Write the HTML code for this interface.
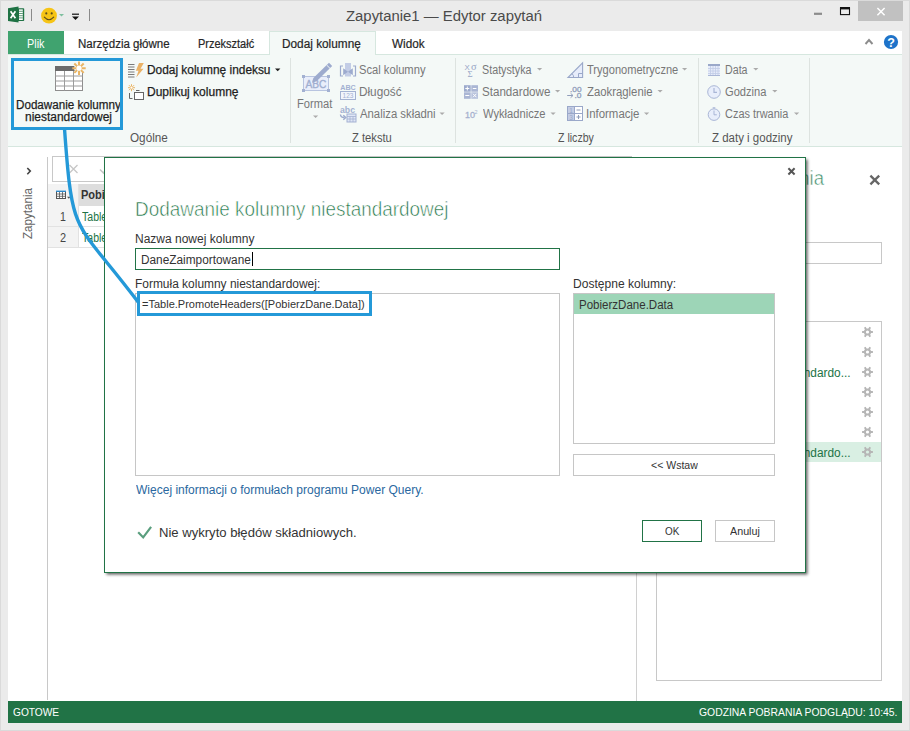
<!DOCTYPE html>
<html>
<head>
<meta charset="utf-8">
<title>Zapytanie1 — Edytor zapytań</title>
<style>
*{box-sizing:border-box;margin:0;padding:0}
html,body{width:910px;height:731px;overflow:hidden;background:#ebebeb}
body{font-family:"Liberation Sans",sans-serif;position:relative;color:#444}
.a{position:absolute}
.t{position:absolute;white-space:nowrap;line-height:1;transform-origin:0 50%}
.b{-webkit-text-stroke:.25px currentColor}
svg{position:absolute;left:0;top:0;overflow:visible}
</style>
</head>
<body>
<!-- window frame -->
<div class="a" style="left:0;top:0;width:910px;height:731px;background:#ebebeb;border:1px solid #dadada"></div>
<!-- close button -->
<div class="a" style="left:858px;top:1px;width:45px;height:20px;background:#c1c1c1"></div>
<!-- tab row -->
<div class="a" style="left:8px;top:31px;width:894px;height:23px;background:#fff"></div>
<div class="a" style="left:8px;top:31px;width:56px;height:23px;background:#40a36f"></div>
<!-- ribbon -->
<div class="a" style="left:8px;top:54px;width:894px;height:93px;background:#f4f9f7;border-top:1px solid #d6e7df;border-bottom:1px solid #d6e7df"></div>
<div class="a" style="left:269px;top:31px;width:107px;height:24px;background:#f4f9f7;border:1px solid #d6e7df;border-bottom:none"></div>
<!-- ribbon separators -->
<div class="a" style="left:290px;top:58px;width:1px;height:85px;background:#dde3e0"></div>
<div class="a" style="left:455px;top:58px;width:1px;height:85px;background:#dde3e0"></div>
<div class="a" style="left:698px;top:58px;width:1px;height:85px;background:#dde3e0"></div>
<div class="a" style="left:809px;top:58px;width:1px;height:85px;background:#dde3e0"></div>
<!-- main -->
<div class="a" style="left:8px;top:147px;width:894px;height:554px;background:#fff"></div>
<!-- left pane line -->
<div class="a" style="left:47px;top:157px;width:1px;height:543px;background:#c8c8c8"></div>
<!-- formula bar -->
<div class="a" style="left:52px;top:156px;width:580px;height:26px;background:#fff;border:1px solid #c8c8c8"></div>
<!-- grid -->
<div class="a" style="left:48px;top:184px;width:31px;height:63px;background:#f3f3f3"></div>
<div class="a" style="left:79px;top:184px;width:120px;height:22px;background:#dddddd"></div>
<div class="a" style="left:48px;top:226px;width:160px;height:1px;background:#e2e2e2"></div>
<div class="a" style="left:48px;top:247px;width:160px;height:1px;background:#e2e2e2"></div>
<div class="a" style="left:78px;top:184px;width:1px;height:63px;background:#e2e2e2"></div>
<!-- right pane -->
<div class="a" style="left:636px;top:157px;width:1px;height:544px;background:#d0d0d0"></div>
<div class="a" style="left:656px;top:242px;width:226px;height:22px;background:#fff;border:1px solid #c8c8c8"></div>
<div class="a" style="left:656px;top:321px;width:226px;height:360px;background:#fff;border:1px solid #c8c8c8"></div>
<div class="a" style="left:657px;top:442px;width:224px;height:20px;background:#d9efe3"></div>
<!-- status bar -->
<div class="a" style="left:8px;top:701px;width:894px;height:22px;background:#217346"></div>

<div class="t" style="left:346.40px;top:8px;font-size:15.5px;color:#4a4a4a;transform:scaleX(0.9600);">Zapytanie1 — Edytor zapytań</div>
<div class="t" style="left:27.33px;top:38px;font-size:12px;color:#fff;transform:scaleX(0.9027);">Plik</div>
<div class="t" style="left:78.00px;top:38px;font-size:12px;color:#262626;transform:scaleX(0.9600);-webkit-text-stroke:.2px #262626">Narzędzia główne</div>
<div class="t" style="left:197.53px;top:38px;font-size:12px;color:#262626;transform:scaleX(0.9156);-webkit-text-stroke:.2px #262626">Przekształć</div>
<div class="t" style="left:281.52px;top:38px;font-size:12px;color:#262626;transform:scaleX(0.9840);-webkit-text-stroke:.2px #262626">Dodaj kolumnę</div>
<div class="t" style="left:391.79px;top:38px;font-size:12px;color:#262626;transform:scaleX(0.9790);-webkit-text-stroke:.2px #262626">Widok</div>
<div class="t" style="left:15.92px;top:99px;font-size:12px;color:#1e1e1e;transform:scaleX(0.9697);-webkit-text-stroke:.25px #1e1e1e">Dodawanie kolumny</div>
<div class="t" style="left:24.82px;top:111px;font-size:12px;color:#1e1e1e;transform:scaleX(0.9958);-webkit-text-stroke:.25px #1e1e1e">niestandardowej</div>
<div class="t" style="left:129.98px;top:132px;font-size:12px;color:#555;transform:scaleX(0.9764);">Ogólne</div>
<div class="t" style="left:146.93px;top:64px;font-size:12px;color:#1e1e1e;transform:scaleX(0.9898);-webkit-text-stroke:.25px #1e1e1e">Dodaj kolumnę indeksu</div>
<div class="t" style="left:147.12px;top:86px;font-size:12px;color:#1e1e1e;transform:scaleX(1.0017);-webkit-text-stroke:.25px #1e1e1e">Duplikuj kolumnę</div>
<div class="t" style="left:296.89px;top:98px;font-size:12px;color:#777;transform:scaleX(0.9290);">Format</div>
<div class="t" style="left:358.62px;top:64px;font-size:12px;color:#777;transform:scaleX(0.9315);">Scal kolumny</div>
<div class="t" style="left:358.69px;top:86px;font-size:12px;color:#777;transform:scaleX(0.9814);">Długość</div>
<div class="t" style="left:360.22px;top:108px;font-size:12px;color:#777;transform:scaleX(0.9449);">Analiza składni</div>
<div class="t" style="left:351.78px;top:132px;font-size:12px;color:#555;transform:scaleX(0.9331);">Z tekstu</div>
<div class="t" style="left:482.02px;top:64px;font-size:12px;color:#777;transform:scaleX(0.8956);">Statystyka</div>
<div class="t" style="left:482.49px;top:86px;font-size:12px;color:#777;transform:scaleX(0.9667);">Standardowe</div>
<div class="t" style="left:482.92px;top:108px;font-size:12px;color:#777;transform:scaleX(0.9292);">Wykładnicze</div>
<div class="t" style="left:587.12px;top:64px;font-size:12px;color:#777;transform:scaleX(0.9225);">Trygonometryczne</div>
<div class="t" style="left:586.99px;top:86px;font-size:12px;color:#777;transform:scaleX(0.9448);">Zaokrąglenie</div>
<div class="t" style="left:585.91px;top:108px;font-size:12px;color:#777;transform:scaleX(0.9523);">Informacje</div>
<div class="t" style="left:557.61px;top:132px;font-size:12px;color:#555;transform:scaleX(0.8812);">Z liczby</div>
<div class="t" style="left:724.53px;top:64px;font-size:12px;color:#777;transform:scaleX(0.8890);">Data</div>
<div class="t" style="left:725.46px;top:86px;font-size:12px;color:#777;transform:scaleX(0.9271);">Godzina</div>
<div class="t" style="left:725.46px;top:108px;font-size:12px;color:#777;transform:scaleX(0.9131);">Czas trwania</div>
<div class="t" style="left:711.77px;top:132px;font-size:12px;color:#555;transform:scaleX(0.9575);">Z daty i godziny</div>
<div class="t" style="left:81.16px;top:189px;font-size:12px;color:#333;transform:scaleX(0.9193);font-weight:bold">Pobi</div>
<div class="t" style="left:82.08px;top:211px;font-size:12px;color:#217346;transform:scaleX(0.8780);">Table</div>
<div class="t" style="left:82.08px;top:232px;font-size:12px;color:#217346;transform:scaleX(0.8780);">Table</div>
<div class="t" style="left:59.66px;top:211px;font-size:12px;color:#444;transform:scaleX(0.8808);">1</div>
<div class="t" style="left:60.37px;top:232px;font-size:12px;color:#444;transform:scaleX(0.9126);">2</div>
<div class="t" style="left:13.00px;top:707px;font-size:11px;color:#fff;transform:scaleX(0.9235);">GOTOWE</div>
<div class="t" style="left:699.02px;top:707px;font-size:11px;color:#fff;transform:scaleX(0.9437);">GODZINA POBRANIA PODGLĄDU: 10:45.</div>
<div class="t" style="left:649.35px;top:168px;font-size:20px;color:#3a8d68;transform:scaleX(0.9257);-webkit-text-stroke:.5px #fff">Ustawienia zapytania</div>
<div class="t" style="left:679.47px;top:367px;font-size:12.5px;color:#217346;transform:scaleX(0.9494);">Dodano kolumnę niestandardo...</div>
<div class="t" style="left:679.47px;top:447px;font-size:12.5px;color:#217346;transform:scaleX(0.9494);">Dodano kolumnę niestandardo...</div>
<div class="t" id="zap" style="left:22px;top:238.500px;font-size:12.500px;color:#666;transform-origin:0 0;transform:rotate(-90deg) scaleX(0.93)">Zapytania</div>

<svg id="icons" width="910" height="731" viewBox="0 0 910 731">
<!-- excel icon -->
<g>
<rect x="16" y="8.200" width="8.200" height="12.800" rx=".8" fill="#217346"/>
<rect x="19" y="9.400" width="3.800" height="10.600" fill="#fff"/>
<path d="M19 11.300h3.800M19 13.500h3.800M19 15.700h3.800M19 17.900h3.800" stroke="#217346" stroke-width=".7" fill="none"/>
<path d="M8 8.300L18.500 6.600V22.600L8 20.900Z" fill="#1f7244"/>
<path d="M10.600 11.200L15.400 18.200M15.400 11.200L10.600 18.200" stroke="#fff" stroke-width="1.700" fill="none"/>
</g>
<rect x="31" y="9" width="1" height="12" fill="#8a8a8a"/>
<rect x="89" y="9" width="1" height="12" fill="#8a8a8a"/>
<!-- smiley -->
<circle cx="49" cy="15.7" r="7.9" fill="#f6c416"/>
<circle cx="46.3" cy="13.4" r="1.05" fill="#5b4a1c"/>
<circle cx="51.7" cy="13.4" r="1.05" fill="#5b4a1c"/>
<path d="M44.3 17.2Q49 22.2 53.7 17.2" stroke="#5b4a1c" stroke-width="1.1" fill="none" stroke-linecap="round"/>
<path d="M59 14h5l-2.5 2.6z" fill="#7fbf9f"/>
<!-- qat customize -->
<rect x="72" y="13.6" width="7" height="1.2" fill="#111"/>
<path d="M72 16.4h7l-3.5 3.6z" fill="#111"/>
<!-- window buttons -->
<rect x="814" y="12.7" width="8" height="2.2" fill="#8c8c8c"/>
<rect x="840.5" y="8" width="9" height="6.6" fill="none" stroke="#111" stroke-width="1.1"/>
<rect x="840" y="7" width="10" height="2.4" fill="#111"/>
<path d="M877.400 8l7.200 7.200M884.600 8l-7.200 7.200" stroke="#fff" stroke-width="1.500" fill="none"/>
<!-- collapse + help -->
<path d="M865.5 44L869 40l3.500 4" stroke="#8c8c8c" stroke-width="1.9" fill="none"/>
<circle cx="891" cy="42" r="7.1" fill="#1e73c9"/>
<text x="891" y="46.6" font-family="Liberation Sans, sans-serif" font-size="12.5" font-weight="bold" fill="#fff" text-anchor="middle">?</text>

<!-- big table icon -->
<g>
<rect x="55.5" y="66.5" width="27" height="24" fill="#fff" stroke="#8e8e8e" stroke-width="1"/>
<rect x="55" y="66" width="28" height="5" fill="#6b6b6b"/>
<path d="M55.5 76h27M55.500 81h27M55.500 86h27M64.500 71v19.500M73.500 71v19.500" stroke="#9c9c9c" stroke-width="1" fill="none"/>
<circle cx="79" cy="68.200" r="5" fill="#f4f9f7"/>
<g stroke="#e9b566" stroke-width="2" fill="none">
<path d="M79 61.500v13.400M72.300 68.200h13.400M74.300 63.500l9.400 9.400M83.700 63.500l-9.400 9.400"/>
</g>
<circle cx="79" cy="68.200" r="2.600" fill="#fff"/>
</g>
<!-- add index column icon -->
<g>
<path d="M128 64.500h6.500M128 67h6.500M128 69.500h6.500M128 72h6.500M128 74.500h6.500M128 77h6.500" stroke="#7a7a7a" stroke-width="1" fill="none"/>
<path d="M139 63h4.800l-3.300 5.700h3l-7.300 8.800 2.300-6.700h-2.600z" fill="#eab267"/>
</g>
<!-- duplicate column icon -->
<g>
<g stroke="#e9b566" stroke-width="1" fill="none"><path d="M131.500 84.200v7M128 87.700h7M129 85.200l5 5M134 85.200l-5 5"/></g>
<circle cx="131.500" cy="87.700" r="1.100" fill="#fff"/>
<path d="M129.500 93v5.500h3" stroke="#666" stroke-width="1" fill="none"/>
<path d="M136 90.500h3.500" stroke="#666" stroke-width="1" fill="none"/>
<rect x="134.500" y="92.500" width="9" height="7" fill="#fff" stroke="#666" stroke-width="1"/>
</g>
<path d="M275 68.400h5.400l-2.700 2.800z" fill="#1e1e1e"/>

<!-- format icon -->
<g>
<rect x="303.500" y="76.500" width="25" height="14" fill="#e9eefb" stroke="#b8c4e0" stroke-width="1"/>
<text x="316" y="88" font-family="Liberation Sans, sans-serif" font-size="11.500" fill="#a0aed0" stroke="#a0aed0" stroke-width=".35" text-anchor="middle" textLength="21" lengthAdjust="spacingAndGlyphs">ABC</text>
<rect x="302" y="75" width="3" height="3" fill="#a3b1d2"/><rect x="327" y="75" width="3" height="3" fill="#a3b1d2"/>
<rect x="302" y="89" width="3" height="3" fill="#a3b1d2"/><rect x="327" y="89" width="3" height="3" fill="#a3b1d2"/>
<path d="M329 62.800l3.200 3.200-15.600 15.200-4.600 1.600 1.400-4.800z" fill="#9dabce"/>
<path d="M326.600 65l3.400 3.400" stroke="#f4f9f7" stroke-width="1"/>
</g>
<path d="M313 115.400h5.200l-2.600 2.600z" fill="#ababab"/>
<!-- scal kolumny icon -->
<g fill="none" stroke="#9dabce" stroke-width="1.200">
<rect x="345" y="63" width="6" height="13.500" fill="#c3cde6" stroke="none"/>
<path d="M343 66h-2.500v10h2.500M353 66h2.500v10h-2.500"/>
<path d="M343.200 68.300l4.800 3.500-4.800 3.500zM352.800 68.300l-4.800 3.500 4.800 3.500z" fill="#9dabce" stroke="none"/>
</g>
<!-- ABC 123 icon -->
<g>
<text x="348" y="89.600" font-family="Liberation Sans, sans-serif" font-size="7.500" font-weight="bold" fill="#a3b1d2" text-anchor="middle" textLength="15.500" lengthAdjust="spacingAndGlyphs">ABC</text>
<rect x="340.500" y="91.500" width="15" height="8" fill="#f2f5fc" stroke="#a3b1d2" stroke-width="1"/>
<text x="348" y="98" font-family="Liberation Sans, sans-serif" font-size="6.500" fill="#a3b1d2" text-anchor="middle" textLength="11" lengthAdjust="spacingAndGlyphs">123</text>
</g>
<!-- abc -> table icon -->
<g>
<text x="347.500" y="112.600" font-family="Liberation Sans, sans-serif" font-size="8.500" font-weight="bold" fill="#a3b1d2" text-anchor="middle" textLength="15" lengthAdjust="spacingAndGlyphs">abc</text>
<path d="M340.500 114.500q0 3 4 3M343.300 115.200l2.500 2.300-2.500 2.300" fill="none" stroke="#9dabce" stroke-width="1.400"/>
<rect x="347" y="114" width="9" height="8" fill="#dfe6f6" stroke="#a3b1d2" stroke-width="1"/>
<path d="M347 116.500h9M347 119h9M350 116.500v5.500M353 116.500v5.500" stroke="#a3b1d2" stroke-width=".8" fill="none"/>
</g>
<path d="M439.500 112.400h5.200l-2.600 2.600z" fill="#ababab"/>

<!-- statistics icon -->
<g fill="#97a5c6">
<text x="464.600" y="69.800" font-family="Liberation Sans, sans-serif" font-size="7.800">X</text>
<text x="471" y="69.800" font-family="Liberation Serif, serif" font-size="10.500">σ</text>
<text x="467.600" y="76.800" font-family="Liberation Serif, serif" font-size="8.800">Σ</text>
</g>
<!-- standard icon -->
<g>
<rect x="464" y="85.200" width="6.700" height="6.500" fill="#9caacc"/>
<rect x="471.300" y="85.200" width="6.700" height="6.500" fill="#aab6d4"/>
<rect x="464" y="92.300" width="6.700" height="6.500" fill="#aab6d4"/>
<rect x="471.300" y="92.300" width="6.700" height="6.500" fill="#b7c2dc"/>
<path d="M465.300 88.500h4M467.300 86.500v4M472.800 88.500h3.600M465.300 95.500h4M473 93.800l3.400 3.400M476.400 93.800l-3.400 3.400" stroke="#fff" stroke-width="1" fill="none"/>
</g>
<!-- 10^2 -->
<text x="465" y="118.300" font-family="Liberation Sans, sans-serif" font-size="9" fill="#a6b1cf" stroke="#a6b1cf" stroke-width=".3">10</text>
<text x="474.500" y="113.500" font-family="Liberation Sans, sans-serif" font-size="5.500" fill="#a6b1cf">2</text>
<path d="M537 68h5.200l-2.600 2.600z" fill="#ababab"/>
<path d="M555 90h5.200l-2.600 2.600z" fill="#ababab"/>
<path d="M550.500 112.400h5.200l-2.600 2.600z" fill="#ababab"/>

<!-- trig icon -->
<path d="M568 77.500h14.600v-14.600z" fill="#e6ecfa" stroke="#9aa8c9" stroke-width="1.100"/>
<path d="M578.500 77.500v-4h4M572 73.600q1.800 1.600 1.600 3.800" fill="none" stroke="#9aa8c9" stroke-width="1"/>
<!-- rounding icon -->
<g font-family="Liberation Sans, sans-serif" fill="#919ebb" stroke="#919ebb" stroke-width=".3" font-size="7.500">
<text x="570" y="91.500" textLength="11.500" lengthAdjust="spacingAndGlyphs">.00</text>
<text x="574.500" y="98.300" textLength="7" lengthAdjust="spacingAndGlyphs">.0</text>
</g>
<path d="M567.200 95.500h5.600M570.600 93.300l2.400 2.200-2.400 2.200" fill="none" stroke="#919ebb" stroke-width="1"/>
<!-- info icon -->
<g>
<rect x="567.500" y="106.500" width="15" height="14" fill="#fff" stroke="#9aa8c9" stroke-width="1"/>
<rect x="568" y="107" width="6.500" height="13" fill="#c4cde4"/>
<path d="M574.500 106.500v14M567.500 113.500h15" stroke="#9aa8c9" stroke-width="1" fill="none"/>
<path d="M576.500 110h4M576.500 117h4M578.500 115v4" stroke="#8f9cb8" stroke-width="1" fill="none"/>
<text x="569.300" y="112.700" font-family="Liberation Sans, sans-serif" font-size="6.500" fill="#9aa8c9">1</text>
<text x="569.300" y="119.800" font-family="Liberation Sans, sans-serif" font-size="6.500" fill="#9aa8c9">3</text>
</g>
<path d="M682 68h5.200l-2.600 2.600z" fill="#ababab"/>
<path d="M657.500 90h5.200l-2.600 2.600z" fill="#ababab"/>
<path d="M644 112.400h5.200l-2.600 2.600z" fill="#ababab"/>

<!-- calendar -->
<g>
<rect x="708" y="64" width="12" height="12" fill="#e6ecfa"/>
<rect x="708" y="64" width="12" height="2" fill="#9aa8c9"/>
<path d="M708 68.500h12M708 71h12M708 73.500h12M710.500 66v9.500M713 66v9.500M715.500 66v9.500M718 66v9.500" stroke="#c0cbe6" stroke-width=".8" fill="none"/>
<rect x="708" y="75" width="12" height="1" fill="#a9b6d6"/>
</g>
<!-- clock -->
<circle cx="714" cy="92" r="6.300" fill="#e8eefb" stroke="#a9b6d6" stroke-width="1"/>
<path d="M714 88v4.300h3" fill="none" stroke="#a9b6d6" stroke-width="1.200"/>
<!-- stopwatch -->
<circle cx="714" cy="114.600" r="5.800" fill="#e8eefb" stroke="#a9b6d6" stroke-width="1"/>
<path d="M712.300 107.300h3.400l-1.700 1.600z" fill="#a9b6d6"/>
<path d="M714 110.500v4.300h2.800" fill="none" stroke="#a9b6d6" stroke-width="1"/>
<path d="M753.200 68h5.200l-2.600 2.600z" fill="#ababab"/>
<path d="M772.200 90h5.200l-2.600 2.600z" fill="#ababab"/>
<path d="M794 112.400h5.200l-2.600 2.600z" fill="#ababab"/>

<!-- left pane chevron -->
<path d="M27.300 168l3 3.100-3 3.100" fill="none" stroke="#444" stroke-width="1.600"/>
<!-- formula bar x and check -->
<path d="M69.500 165l8 8M77.500 165l-8 8" stroke="#c6c6c6" stroke-width="1.300" fill="none"/>
<path d="M100 169.500l3.500 3.500 6-8" stroke="#c6c6c6" stroke-width="1.500" fill="none"/>
<!-- table mini icon -->
<g>
<rect x="56.500" y="191.500" width="9" height="7" fill="#fff" stroke="#555" stroke-width="1"/>
<path d="M56.500 194h9M56.500 196.300h9M59.500 191.500v7M62.500 191.500v7" stroke="#555" stroke-width=".8" fill="none"/>
<rect x="56" y="190.600" width="10" height="1.300" fill="#2a8dd4"/>
<path d="M67 196.800h3.600l-1.800 2z" fill="#555"/>
</g>
<!-- pane close -->
<path d="M870.400 175.600l8.800 8.800M879.200 175.600l-8.800 8.800" stroke="#666" stroke-width="2.300" fill="none"/>
<path d="M870.10 332.00L872.90 332.00M868.80 334.25L870.20 336.68M866.20 334.25L864.80 336.68M864.90 332.00L862.10 332.00M866.20 329.75L864.80 327.32M868.80 329.75L870.20 327.32" stroke="#b6b6b6" stroke-width="1.9" fill="none"/><circle cx="867.5" cy="332" r="2.6" fill="none" stroke="#b6b6b6" stroke-width="2"/>
<path d="M870.10 352.00L872.90 352.00M868.80 354.25L870.20 356.68M866.20 354.25L864.80 356.68M864.90 352.00L862.10 352.00M866.20 349.75L864.80 347.32M868.80 349.75L870.20 347.32" stroke="#b6b6b6" stroke-width="1.9" fill="none"/><circle cx="867.5" cy="352" r="2.6" fill="none" stroke="#b6b6b6" stroke-width="2"/>
<path d="M870.10 372.00L872.90 372.00M868.80 374.25L870.20 376.68M866.20 374.25L864.80 376.68M864.90 372.00L862.10 372.00M866.20 369.75L864.80 367.32M868.80 369.75L870.20 367.32" stroke="#b6b6b6" stroke-width="1.9" fill="none"/><circle cx="867.5" cy="372" r="2.6" fill="none" stroke="#b6b6b6" stroke-width="2"/>
<path d="M870.10 392.00L872.90 392.00M868.80 394.25L870.20 396.68M866.20 394.25L864.80 396.68M864.90 392.00L862.10 392.00M866.20 389.75L864.80 387.32M868.80 389.75L870.20 387.32" stroke="#b6b6b6" stroke-width="1.9" fill="none"/><circle cx="867.5" cy="392" r="2.6" fill="none" stroke="#b6b6b6" stroke-width="2"/>
<path d="M870.10 412.00L872.90 412.00M868.80 414.25L870.20 416.68M866.20 414.25L864.80 416.68M864.90 412.00L862.10 412.00M866.20 409.75L864.80 407.32M868.80 409.75L870.20 407.32" stroke="#b6b6b6" stroke-width="1.9" fill="none"/><circle cx="867.5" cy="412" r="2.6" fill="none" stroke="#b6b6b6" stroke-width="2"/>
<path d="M870.10 432.00L872.90 432.00M868.80 434.25L870.20 436.68M866.20 434.25L864.80 436.68M864.90 432.00L862.10 432.00M866.20 429.75L864.80 427.32M868.80 429.75L870.20 427.32" stroke="#b6b6b6" stroke-width="1.9" fill="none"/><circle cx="867.5" cy="432" r="2.6" fill="none" stroke="#b6b6b6" stroke-width="2"/>
<path d="M870.10 452.00L872.90 452.00M868.80 454.25L870.20 456.68M866.20 454.25L864.80 456.68M864.90 452.00L862.10 452.00M866.20 449.75L864.80 447.32M868.80 449.75L870.20 447.32" stroke="#b6b6b6" stroke-width="1.9" fill="none"/><circle cx="867.5" cy="452" r="2.6" fill="none" stroke="#b6b6b6" stroke-width="2"/>
</svg>

<!-- dialog -->
<div class="a" style="left:104px;top:157px;width:702px;height:416px;background:#fff;border:1px solid #217346;box-shadow:1.5px 1.5px 3px rgba(0,0,0,0.65)"></div>
<div class="a" style="left:135px;top:248px;width:425px;height:22px;border:1px solid #217346;background:#fff"></div>
<div class="a" style="left:252px;top:252px;width:1px;height:14px;background:#000"></div>
<div class="a" style="left:135px;top:293px;width:425px;height:183px;border:1px solid #c6c6c6;background:#fff"></div>
<div class="a" style="left:573px;top:293px;width:202px;height:151px;border:1px solid #c6c6c6;background:#fff"></div>
<div class="a" style="left:574px;top:294px;width:200px;height:20px;background:#9dd5b7"></div>
<div class="a" style="left:573px;top:454px;width:202px;height:22px;border:1px solid #c6c6c6;background:#fff"></div>
<div class="a" style="left:642px;top:520px;width:60px;height:22px;border:1px solid #217346;background:#fff"></div>
<div class="a" style="left:715px;top:520px;width:60px;height:22px;border:1px solid #c6c6c6;background:#fff"></div>

<div class="t" style="left:135.03px;top:199px;font-size:20.5px;color:#1f7547;transform:scaleX(0.9231);-webkit-text-stroke:.6px #fff">Dodawanie kolumny niestandardowej</div>
<div class="t" style="left:134.93px;top:233px;font-size:12px;color:#333;transform:scaleX(1.0002);">Nazwa nowej kolumny</div>
<div class="t" style="left:141.07px;top:254px;font-size:12px;color:#333;transform:scaleX(0.9857);">DaneZaimportowane</div>
<div class="t" style="left:135.05px;top:278px;font-size:12px;color:#333;transform:scaleX(0.9953);">Formuła kolumny niestandardowej:</div>
<div class="t" style="left:142.10px;top:299px;font-size:11px;color:#333;transform:scaleX(1.0016);">=Table.PromoteHeaders([PobierzDane.Data])</div>
<div class="t" style="left:572.85px;top:278px;font-size:12px;color:#333;transform:scaleX(1.0044);">Dostępne kolumny:</div>
<div class="t" style="left:578.69px;top:299px;font-size:12px;color:#333;transform:scaleX(0.9609);">PobierzDane.Data</div>
<div class="t" style="left:651.13px;top:460px;font-size:11px;color:#333;transform:scaleX(0.9563);">&lt;&lt; Wstaw</div>
<div class="t" style="left:136.14px;top:484px;font-size:12px;color:#2a68a0;transform:scaleX(1.0017);">Więcej informacji o formułach programu Power Query.</div>
<div class="t" style="left:159.05px;top:526px;font-size:13px;color:#333;transform:scaleX(1.0056);">Nie wykryto błędów składniowych.</div>
<div class="t" style="left:664.70px;top:526px;font-size:11px;color:#333;transform:scaleX(0.9006);">OK</div>
<div class="t" style="left:730.07px;top:526px;font-size:11px;color:#333;transform:scaleX(0.9764);">Anuluj</div>

<svg id="over" width="910" height="731" viewBox="0 0 910 731">
<path d="M788.400 168.300l6.200 6.200M794.600 168.300l-6.200 6.200" stroke="#555" stroke-width="2" fill="none"/>
<path d="M138.200 532.200l5 5.200 7.900-10.500" stroke="#5a9e7e" stroke-width="2.200" fill="none"/>
<rect x="12.5" y="59.5" width="109" height="69" fill="none" stroke="#2499d8" stroke-width="3"/>
<rect x="138.5" y="292.5" width="232" height="22" fill="none" stroke="#2499d8" stroke-width="3"/>
<path d="M64.6,130 C72.68,241.07 74.09,217.02 138.5,302.6" fill="none" stroke="#2499d8" stroke-width="3.4"/>
</svg>
</body>
</html>
